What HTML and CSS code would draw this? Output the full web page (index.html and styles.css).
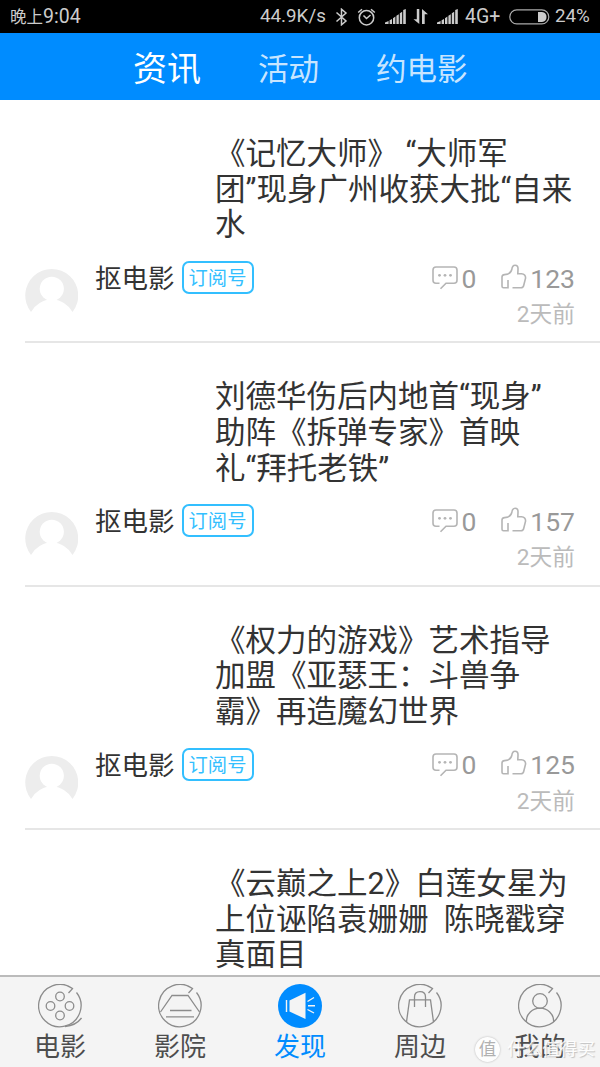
FILE: index.html
```html
<!DOCTYPE html>
<html lang="zh-CN">
<head>
    <meta charset="UTF-8">
    <meta name="viewport" content="width=device-width, initial-scale=1.0">
    <title>资讯</title>
    <link rel="stylesheet" href="styles.css">
</head>
<body>
    <!-- shared icons -->
    <svg class="defs" width="0" height="0">
        <symbol id="avatar" viewBox="0 0 53 44">
            <path d="M6 44 A26.5 26.5 0 1 1 47.500 44 A23.5 23.5 0 0 0 6 44Z" fill="#ededed"/>
            <circle cx="26.800" cy="20.800" r="12.100" fill="#fff"/>
        </symbol>
        <symbol id="comment" viewBox="0 0 26 24">
            <path d="M7.500 17.300H4Q1 17.300 1 14.300V4Q1 1 4 1H22Q25 1 25 4V14.300Q25 17.300 22 17.300H14L8.500 22.800" fill="none" stroke="#b5b5b5" stroke-width="1.600"/>
            <circle cx="7.500" cy="9.300" r="1.400" fill="#b5b5b5"/>
            <circle cx="13" cy="9.300" r="1.400" fill="#b5b5b5"/>
            <circle cx="18.500" cy="9.300" r="1.400" fill="#b5b5b5"/>
        </symbol>
        <symbol id="like" viewBox="0 0 27 26">
            <path d="M8 16V23.700H3.500Q2 23.700 2 22.200V13Q2 10.800 4.500 10.600Q10.500 10.300 11.800 5.500Q12.300 1.200 15 1.200Q18.300 1.200 18 5.500L17.800 9.800H21.500Q25.600 10.200 25.600 14L23.700 21.500Q23.200 23.700 21 23.700H12.500" fill="none" stroke="#b5b5b5" stroke-width="1.600"/>
        </symbol>
        <symbol id="signal" viewBox="0 0 21 15">
            <path d="M0 15V13.500L3.600 12V15ZM4.600 15V11.300L7 10V15ZM8 15V9.200L10.400 7.600V15ZM11.400 15V6.800L13.800 5.200V15ZM14.800 15V4.300L17.200 2.700V15ZM18.200 15V1L20.800 0V15Z" fill="#ccc"/>
        </symbol>
        <symbol id="ring" viewBox="0 0 44 44">
            <path d="M30.500 9L34.500 4.600A21.200 21.200 0 1 0 38.500 8.500" fill="none" stroke="#8c8c8c" stroke-width="1.300"/>
        </symbol>
    </svg>

    <div class="status-bar">
        <div class="time"><span>晚上</span>9:04</div>
        <div class="status-info">
            <span class="speed">44.9K/s</span>
            <svg width="13" height="18" viewBox="0 0 13 18"><path d="M1.500 4.500L11 13L6.500 16.800V1.200L11 5L1.500 13.500" fill="none" stroke="#ccc" stroke-width="1.500"/></svg>
            <svg width="19" height="18" viewBox="0 0 19 18">
                <circle cx="9.500" cy="9.700" r="7.200" fill="none" stroke="#ccc" stroke-width="1.500"/>
                <path d="M6.500 7.500L9.500 10.500L13.500 7M1.200 4.500L5 1.200M17.800 4.500L14 1.200" fill="none" stroke="#ccc" stroke-width="1.500"/>
            </svg>
            <svg width="21" height="15"><use href="#signal"/></svg>
            <svg width="16" height="15" viewBox="0 0 16 15"><path d="M3.800 0H6.300V15L0.500 10.200H3.800ZM9 0L15 5.200H11.700V15H9Z" fill="#ccc"/></svg>
            <svg width="21" height="15"><use href="#signal"/></svg>
            <span class="net">4G+</span>
            <svg width="41" height="16" viewBox="0 0 41 16">
                <rect x="0.800" y="0.900" width="39" height="14" rx="7" fill="none" stroke="#aaa" stroke-width="1.200"/>
                <path d="M29 3H33Q37.500 3.500 37.500 7.900Q37.500 12.500 33 12.900H29Z" fill="#ccc"/>
            </svg>
            <span class="percent">24%</span>
        </div>
    </div>

    <div class="top-tabs">
        <a class="tab active">资讯</a>
        <a class="tab">活动</a>
        <a class="tab">约电影</a>
    </div>

    <div class="news-list">
        <div class="news-item">
            <h2>《记忆大师》 “大师军<br>团”现身广州收获大批“自来<br>水</h2>
            <div class="meta">
                <svg class="avatar" width="53" height="44"><use href="#avatar"/></svg>
                <span class="author">抠电影</span>
                <span class="tag">订阅号</span>
                <div class="stats">
                    <div class="counts">
                        <svg class="comment" width="26" height="24"><use href="#comment"/></svg>0
                        <svg class="like" width="27" height="26"><use href="#like"/></svg>123
                    </div>
                    <div class="date">2天前</div>
                </div>
            </div>
        </div>
        <div class="news-item">
            <h2>刘德华伤后内地首“现身”<br>助阵《拆弹专家》首映<br>礼“拜托老铁”</h2>
            <div class="meta">
                <svg class="avatar" width="53" height="44"><use href="#avatar"/></svg>
                <span class="author">抠电影</span>
                <span class="tag">订阅号</span>
                <div class="stats">
                    <div class="counts">
                        <svg class="comment" width="26" height="24"><use href="#comment"/></svg>0
                        <svg class="like" width="27" height="26"><use href="#like"/></svg>157
                    </div>
                    <div class="date">2天前</div>
                </div>
            </div>
        </div>
        <div class="news-item">
            <h2>《权力的游戏》艺术指导<br>加盟《亚瑟王：斗兽争<br>霸》再造魔幻世界</h2>
            <div class="meta">
                <svg class="avatar" width="53" height="44"><use href="#avatar"/></svg>
                <span class="author">抠电影</span>
                <span class="tag">订阅号</span>
                <div class="stats">
                    <div class="counts">
                        <svg class="comment" width="26" height="24"><use href="#comment"/></svg>0
                        <svg class="like" width="27" height="26"><use href="#like"/></svg>125
                    </div>
                    <div class="date">2天前</div>
                </div>
            </div>
        </div>
        <div class="news-item">
            <h2>《云巅之上2》白莲女星为<br>上位诬陷袁姗姗&nbsp; 陈晓戳穿<br>真面目</h2>
        </div>
    </div>

    <div class="bottom-nav">
        <a class="nav-item">
            <svg width="44" height="44" viewBox="0 0 44 44">
                <use href="#ring"/>
                <g fill="none" stroke="#8c8c8c" stroke-width="1.300">
                    <circle cx="22" cy="12.500" r="4.300"/>
                    <circle cx="12.500" cy="22" r="4.300"/>
                    <circle cx="31.500" cy="22" r="4.300"/>
                    <circle cx="22" cy="31.500" r="4.300"/>
                    <path d="M27 42.500Q38 41.500 43.500 34"/>
                </g>
            </svg>
            <span>电影</span>
        </a>
        <a class="nav-item">
            <svg width="44" height="44" viewBox="0 0 44 44">
                <use href="#ring"/>
                <path d="M2.500 28L14 11.500H30L41.500 28M12 26.500H33.500M8 32.800H36" fill="none" stroke="#8c8c8c" stroke-width="1.300"/>
            </svg>
            <span>影院</span>
        </a>
        <a class="nav-item active">
            <svg width="44" height="44" viewBox="0 0 44 44">
                <circle cx="22" cy="22" r="22" fill="#008cff"/>
                <path d="M11.500 16.500L27.500 8.800V35L11.500 27.500Z" fill="#f4f4f4"/>
                <path d="M8.500 16V28M29.500 17.500L36 13.500M30 21.800H37M29.500 25.500L36 29" stroke="#f4f4f4" stroke-width="1.400"/>
            </svg>
            <span>发现</span>
        </a>
        <a class="nav-item">
            <svg width="44" height="44" viewBox="0 0 44 44">
                <use href="#ring"/>
                <path d="M8.500 38L11.500 15.800H32.500L35.500 38M16.500 23V13Q16.500 7.700 22 7.700Q27.500 7.700 27.500 13V23" fill="none" stroke="#8c8c8c" stroke-width="1.300"/>
            </svg>
            <span>周边</span>
        </a>
        <a class="nav-item">
            <svg width="44" height="44" viewBox="0 0 44 44">
                <use href="#ring"/>
                <g fill="none" stroke="#8c8c8c" stroke-width="1.300">
                    <circle cx="22" cy="17" r="7.300"/>
                    <path d="M8.300 38V37.200A13.700 13 0 0 1 35.700 37.200V38"/>
                </g>
            </svg>
            <span>我的</span>
        </a>
    </div>

    <div class="watermark">
        <span class="badge">值</span>
        <span>什么值得买</span>
    </div>
</body>
</html>
```
FILE: styles.css
```css
* {
    box-sizing: border-box;
}
body {
    margin: 0;
    width: 600px;
    height: 1067px;
    display: flex;
    flex-direction: column;
    overflow: hidden;
    position: relative;
    background-color: #fff;
    color: #333;
    font-family: Roboto, "Noto Sans CJK SC", sans-serif;
    text-spacing-trim: space-all;
    white-space: nowrap;
}
.defs {
    position: absolute;
}
.status-bar {
    flex: none;
    display: flex;
    justify-content: space-between;
    align-items: center;
    height: 33px;
    padding-left: 10px;
    background-color: #000;
    color: #ccc;
    font-size: 19.500px;
    line-height: 33px;
}
.time span {
    font-size: 16.500px;
}
.status-info {
    display: grid;
    grid-template-columns: 75px 22px 28px 28px 24px 28px 44px 46px 46px;
    align-items: center;
    height: 33px;
    margin-right: -1px;
}
.speed {
    font-size: 18.800px;
}
.net {
    font-size: 19.500px;
}
.percent {
    font-size: 18.800px;
}
.top-tabs {
    flex: none;
    display: flex;
    align-items: center;
    gap: 57px;
    height: 67px;
    padding-left: 133px;
    background-color: #008cff;
}
.tab {
    color: rgba(255, 255, 255, 0.8);
    font-size: 30.500px;
}
.tab.active {
    color: #fff;
    font-size: 34px;
}
.news-list {
    flex: 1;
    min-height: 0;
    overflow: hidden;
    padding-left: 25px;
}
.news-item {
    height: 243.300px;
    padding-top: 36px;
    border-bottom: 2px solid #e6e6e6;
}
.news-item h2 {
    margin: 0 0 0 190px;
    font-size: 30.500px;
    font-weight: normal;
    line-height: 35.700px;
}
.meta {
    display: flex;
    align-items: flex-start;
    padding: 18px 25px 0 0;
}
.avatar {
    margin-top: 7px;
}
.author {
    margin-left: 17px;
    font-size: 26.500px;
    line-height: 36px;
}
.tag {
    margin-left: 7px;
    width: 72px;
    height: 33px;
    border: 2px solid #33bfff;
    border-radius: 7px;
    color: #33bfff;
    font-size: 19.300px;
    line-height: 31px;
    text-align: center;
}
.stats {
    margin-left: auto;
    text-align: right;
}
.counts {
    display: flex;
    align-items: center;
    height: 34px;
    color: #999;
    font-size: 26.500px;
}
.comment {
    margin-right: 3px;
}
.like {
    margin: 0 3px 3px 24px;
}
.date {
    color: #bbb;
    font-size: 22.700px;
    line-height: 40px;
}
.bottom-nav {
    flex: none;
    display: grid;
    grid-template-columns: repeat(5, 1fr);
    height: 92px;
    border-top: 2px solid #bbb;
    background-color: #f4f4f4;
}
.nav-item {
    display: flex;
    flex-direction: column;
    align-items: center;
    padding-top: 7px;
    color: #4d4d4d;
    font-size: 26px;
    line-height: 38px;
}
.nav-item.active {
    color: #008cff;
}
/* translucent mark over the last nav item */
.watermark {
    position: absolute;
    right: 5px;
    bottom: 5px;
    display: flex;
    align-items: center;
    gap: 7px;
    color: #fff;
    font-size: 17.600px;
    line-height: 26px;
    text-shadow: 1px 1px 1px #bbb;
    opacity: 0.9;
}
.badge {
    width: 25px;
    height: 25px;
    border-radius: 50%;
    background-color: #fff;
    box-shadow: 0 0 2px #aaa;
    color: #aaa;
    line-height: 24px;
    text-align: center;
    text-shadow: none;
}
```
